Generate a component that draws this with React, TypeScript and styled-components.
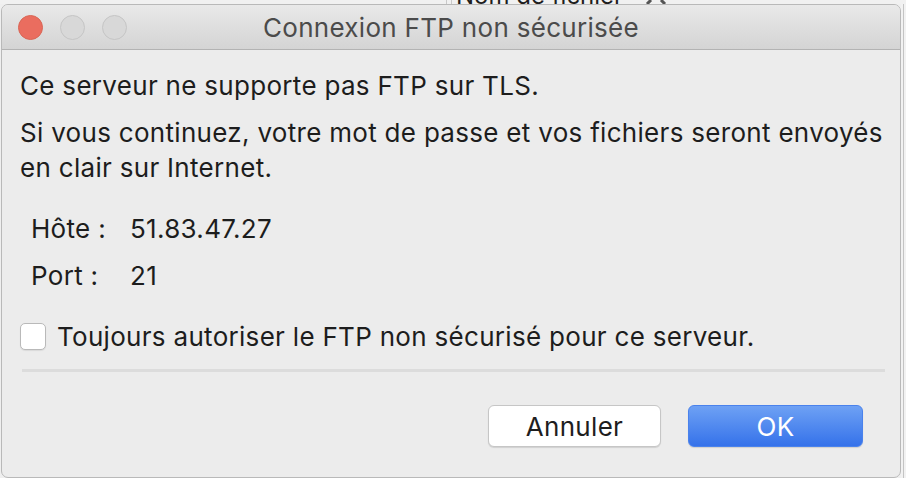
import React from "react";
import styled, { createGlobalStyle } from "styled-components";

const GlobalStyle = createGlobalStyle`
  html, body { margin: 0; padding: 0; }
  body {
    background: #efefef;
    font-family: Inter, "Noto Sans", "Liberation Sans", sans-serif;
    -webkit-font-smoothing: antialiased;
  }
`;

const Desktop = styled.div`
  width: 906px;
  height: 478px;
  display: flex;
  flex-direction: column;
  background: #efefef;
  overflow: hidden;
`;

const BackHeader = styled.div`
  height: 4px;
  flex: none;
  display: flex;
  align-items: flex-end;
  overflow: hidden;
  padding-left: 446px;
  background: #f1f1f1;
`;

const ColumnRule = styled.div`
  width: 6px;
  height: 4px;
  border-left: 1px solid #c9c9c9;
  border-right: 1px solid #c9c9c9;
  box-sizing: border-box;
`;

const BackHeaderText = styled.span`
  margin-left: 4px;
  font-size: 24px;
  line-height: 24px;
  height: 4px;
  display: flex;
  align-items: flex-end;
  color: #1e1e1e;
  white-space: nowrap;
  & > span {
    transform: translateY(4px);
  }
`;

const Chevron = styled.svg`
  margin-left: 22px;
  flex: none;
`;

const WindowRow = styled.div`
  flex: 1;
  display: flex;
  min-height: 0;
`;

const Window = styled.div`
  width: 900px;
  margin-left: 1px;
  display: flex;
  flex-direction: column;
  border: 1px solid #b9b9b9;
  border-radius: 7px;
  box-sizing: border-box;
  overflow: hidden;
  background: #ececec;
`;

const RightStrip = styled.div`
  flex: 1;
  display: flex;
  justify-content: center;
  background: #f2f2f2;
  & > div {
    width: 1px;
    background: #c4c4c4;
  }
`;

const TitleBar = styled.div`
  height: 45px;
  flex: none;
  display: flex;
  align-items: center;
  position: relative;
  padding-left: 16px;
  padding-top: 1px;
  background: linear-gradient(#e9e9e9, #d4d4d4);
  border-bottom: 1px solid #b3b3b3;
  box-sizing: border-box;
  gap: 17px;
`;

const Light = styled.div<{ $color?: string }>`
  width: 25px;
  height: 25px;
  border-radius: 50%;
  box-sizing: border-box;
  background: ${(p) => p.$color ?? "#d8d8d8"};
  border: 1px solid ${(p) => (p.$color ? "#d96655" : "#c5c5c5")};
`;

const Title = styled.div`
  position: absolute;
  left: 0;
  right: 0;
  top: 1px;
  bottom: 0;
  display: flex;
  align-items: center;
  justify-content: center;
  font-size: 26px;
  letter-spacing: 0.3px;
  color: #4b4b4b;
  pointer-events: none;
`;

const Body = styled.div`
  flex: 1;
  display: flex;
  flex-direction: column;
  padding: 18px 18px 0 18px;
  color: #1d1d1d;
  font-size: 26px;
  letter-spacing: 0.3px;
`;

const Para = styled.p<{ $gap?: number }>`
  margin: 0 0 ${(p) => p.$gap ?? 12}px 0;
  line-height: 35px;
  white-space: nowrap;
`;

const InfoGrid = styled.div`
  display: grid;
  grid-template-columns: 99px auto;
  row-gap: 12px;
  padding-left: 11px;
  margin-top: 26px;
  line-height: 35px;
`;

const CheckRow = styled.label`
  display: flex;
  align-items: center;
  gap: 11px;
  margin-top: 26px;
  height: 35px;
`;

const CheckBox = styled.span`
  width: 26px;
  height: 27px;
  border-radius: 5px;
  background: #ffffff;
  border: 1px solid #b9b9b9;
  box-sizing: border-box;
  box-shadow: 0 1px 1px rgba(0, 0, 0, 0.08);
`;

const Separator = styled.div`
  height: 3px;
  background: #dcdcdc;
  margin: 15px 0 0 2px;
  width: 863px;
`;

const ButtonBar = styled.div`
  display: flex;
  justify-content: flex-end;
  gap: 27px;
  padding-right: 19px;
  margin-top: 33px;
`;

const Button = styled.button<{ $primary?: boolean }>`
  font-family: inherit;
  font-size: 26px;
  letter-spacing: 0.3px;
  height: 42px;
  width: ${(p) => (p.$primary ? 175 : 173)}px;
  border-radius: 6px;
  box-sizing: border-box;
  cursor: pointer;
  color: ${(p) => (p.$primary ? "#ffffff" : "#1e1e1e")};
  border: 1px solid ${(p) => (p.$primary ? "#4a82ec" : "#c6c6c6")};
  background: ${(p) =>
    p.$primary ? "linear-gradient(#6ea1f4, #3572ea)" : "#ffffff"};
  box-shadow: 0 1px 1px rgba(0, 0, 0, 0.12);
  padding: 0;
`;

export default function App() {
  return (
    <>
      <GlobalStyle />
      <Desktop>
        <BackHeader>
          <ColumnRule />
          <BackHeaderText>
            <span>Nom de fichier</span>
          </BackHeaderText>
          <Chevron width="22" height="4" viewBox="0 0 22 4">
            <path d="M2 4 L6 0 M20 4 L16 0" stroke="#555" strokeWidth="3" />
          </Chevron>
        </BackHeader>
        <WindowRow>
          <Window>
            <TitleBar>
              <Light $color="#ea6d5f" />
              <Light />
              <Light />
              <Title>Connexion FTP non sécurisée</Title>
            </TitleBar>
            <Body>
              <Para>Ce serveur ne supporte pas FTP sur TLS.</Para>
              <Para $gap={0}>
                Si vous continuez, votre mot de passe et vos fichiers seront envoyés
                <br />
                en clair sur Internet.
              </Para>
              <InfoGrid>
                <span>Hôte :</span>
                <span>51.83.47.27</span>
                <span>Port :</span>
                <span>21</span>
              </InfoGrid>
              <CheckRow>
                <CheckBox />
                <span>Toujours autoriser le FTP non sécurisé pour ce serveur.</span>
              </CheckRow>
              <Separator />
              <ButtonBar>
                <Button>Annuler</Button>
                <Button $primary>OK</Button>
              </ButtonBar>
            </Body>
          </Window>
          <RightStrip>
            <div />
          </RightStrip>
        </WindowRow>
      </Desktop>
    </>
  );
}
